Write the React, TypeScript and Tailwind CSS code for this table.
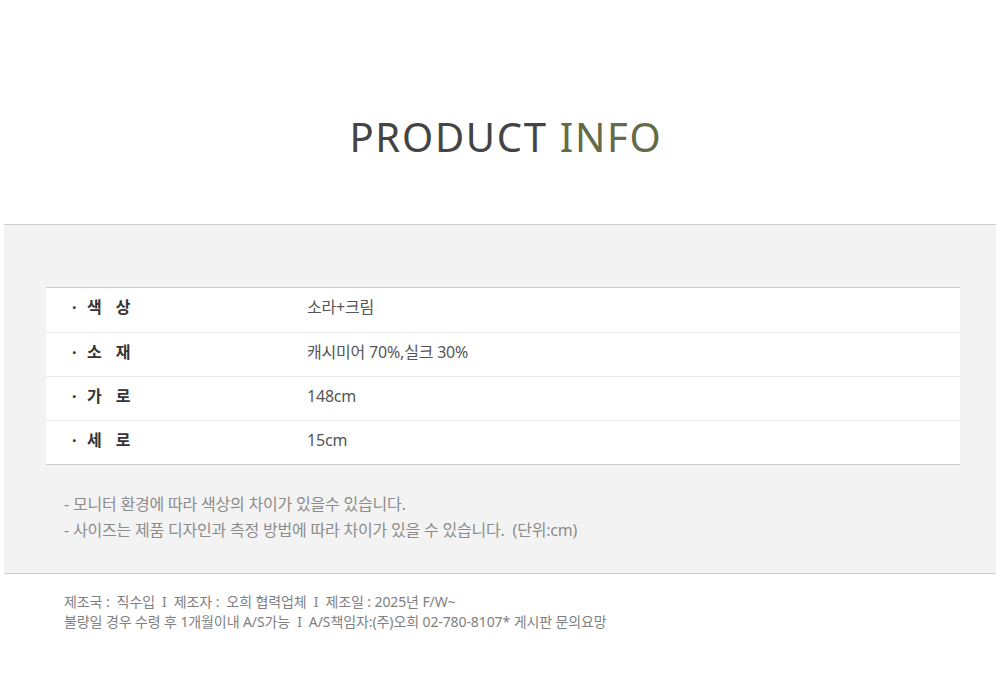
const rows = [
  { label: ['색', '상'], value: '소라+크림' },
  { label: ['소', '재'], value: '캐시미어 70%,실크 30%' },
  { label: ['가', '로'], value: '148cm' },
  { label: ['세', '로'], value: '15cm' },
]

const kr = "font-['Noto_Sans','Noto_Sans_CJK_KR',sans-serif]"

export default function App() {
  return (
    <div className={`bg-white w-[1000px] h-[696px] ${kr}`}>
      <div className="h-[224px] flex items-start justify-center pt-[117px] pl-[12px]">
        <h1 className="text-[40px] tracking-[1.7px] text-[#444444] font-normal leading-none">
          PRODUCT <span className="text-[#646b47]">INFO</span>
        </h1>
      </div>

      <div className="mx-[4px] bg-[#f3f3f3] border-t border-b border-[#cfcfcf] pt-[62px] h-[350px]">
        <div className="ml-[42px] mr-[36px] bg-white border-t border-b border-[#cccccc]">
          {rows.map((row, i) => (
            <div
              key={i}
              className={`flex items-center h-[44px] pb-[6px] ${i > 0 ? 'border-t border-[#ebebeb]' : ''}`}
            >
              <div className="w-[261px] pl-[26px] flex items-center text-[16px] font-bold text-[#333333]">
                <span className="w-[15px]">·</span>
                <span>{row.label[0]}</span>
                <span className="ml-[14px]">{row.label[1]}</span>
              </div>
              <div className="text-[16px] text-[#555555] tracking-[-0.2px]">{row.value}</div>
            </div>
          ))}
        </div>

        <div className="mt-[26px] pl-[60px] text-[16px] text-[#8c8c8c] leading-[26px] tracking-[-0.2px]">
          <p>- 모니터 환경에 따라 색상의 차이가 있을수 있습니다.</p>
          <p>- 사이즈는 제품 디자인과 측정 방법에 따라 차이가 있을 수 있습니다. &nbsp;(단위:cm)</p>
        </div>
      </div>

      <div className="pt-[18px] pl-[64px] text-[14px] text-[#808080] leading-[20px] tracking-[-0.1px]">
        <p>제조국 : &nbsp;직수입 &nbsp;I &nbsp;제조자 : &nbsp;오희 협력업체 &nbsp;I &nbsp;제조일 : 2025년 F/W~</p>
        <p>불량일 경우 수령 후 1개월이내 A/S가능 &nbsp;I &nbsp;A/S책임자:(주)오희 02-780-8107* 게시판 문의요망</p>
      </div>
    </div>
  )
}
